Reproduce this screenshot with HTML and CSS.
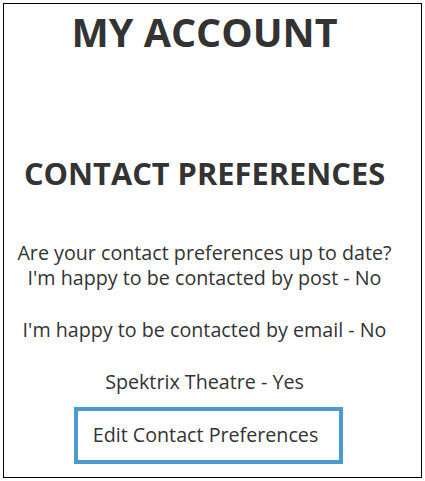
FILE: index.html
```html
<!DOCTYPE html>
<html>
<head>
  <title>My account</title>
  <meta charset="utf-8">
  <link rel="stylesheet" href="styles.css">
</head>
<body>
  <div class="account">
    <h1>MY ACCOUNT</h1>

    <h2>CONTACT PREFERENCES</h2>

    <div class="prefs">
      <p>Are your contact preferences up to date?<br>I'm happy to be contacted by post - No</p>
      <p>I'm happy to be contacted by email - No</p>
      <p>Spektrix Theatre - Yes</p>
    </div>

    <a class="edit-btn" href="#">Edit Contact Preferences</a>
  </div>
</body>
</html>
```

FILE: styles.css
```css
* {margin: 0; padding: 0; box-sizing: border-box;}
body {font-family: 'Open Sans', sans-serif; color: #333; background: #fff;}

.account {margin: 3px; width: 419px; height: 475px; border: 1px solid #000; padding: 4px 16px 0 0; text-align: center;}

h1 {font-size: 39.5px; font-weight: 700; line-height: 48px;}
h2 {font-size: 30.8px; font-weight: 700; line-height: 40px; margin-top: 97px;}

.prefs {font-size: 19.7px; line-height: 25px; margin-top: 47px;}
.prefs p + p {margin-top: 27px;}

.edit-btn {display: inline-block; margin-top: 13px; margin-left: 8px; padding: 9px 21px 11px 15px; border: 4px solid #4a9bd0; color: #333; text-decoration: none; font-size: 19.7px; line-height: 29px;}
```
